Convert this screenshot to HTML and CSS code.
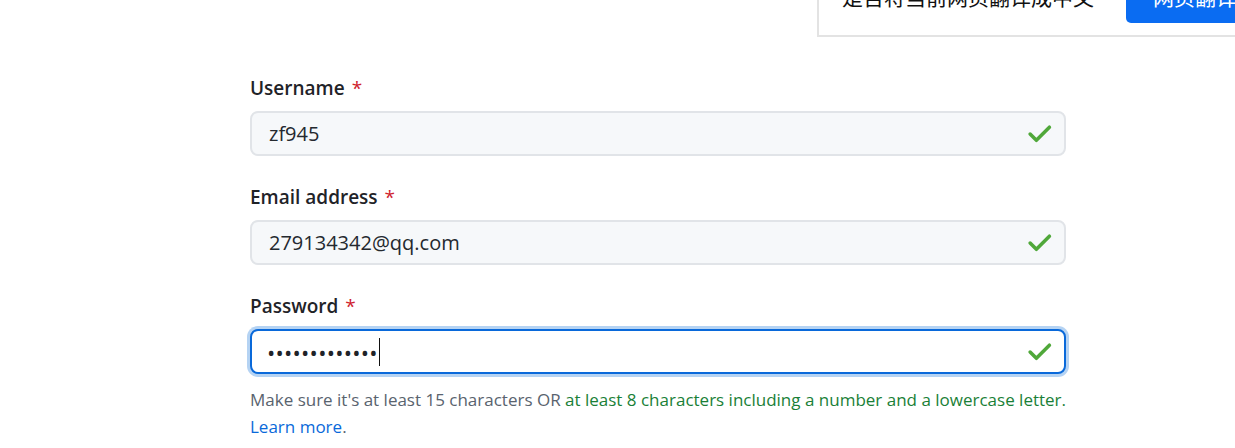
FILE: index.html
```html
<!DOCTYPE html>
<html lang="en">
<head>
<meta charset="utf-8">
<title>Sign up</title>
<link rel="stylesheet" href="styles.css">
</head>
<body>
<div class="translate-bar">
  <span class="translate-text">是否将当前网页翻译成中文</span>
  <div class="translate-btn">网页翻译</div>
</div>
<main class="form">
  <div class="field">
    <label class="label">Username <span class="req">*</span></label>
    <div class="input">
      <span class="value">zf945</span>
      <svg class="check" viewBox="0 0 24 18" width="25" height="19"><path d="M3 9.5l6 6L21.5 3" fill="none" stroke="#50a83a" stroke-width="3.4" stroke-linecap="round" stroke-linejoin="round"/></svg>
    </div>
  </div>
  <div class="field">
    <label class="label">Email address <span class="req">*</span></label>
    <div class="input">
      <span class="value">279134342@qq.com</span>
      <svg class="check" viewBox="0 0 24 18" width="25" height="19"><path d="M3 9.5l6 6L21.5 3" fill="none" stroke="#50a83a" stroke-width="3.4" stroke-linecap="round" stroke-linejoin="round"/></svg>
    </div>
  </div>
  <div class="field">
    <label class="label">Password <span class="req">*</span></label>
    <div class="input focused">
      <span class="value dots">•••••••••••••</span><span class="caret"></span>
      <svg class="check" viewBox="0 0 24 18" width="25" height="19"><path d="M3 9.5l6 6L21.5 3" fill="none" stroke="#50a83a" stroke-width="3.4" stroke-linecap="round" stroke-linejoin="round"/></svg>
    </div>
    <p class="help">Make sure it's at least 15 characters OR <span class="ok">at least 8 characters including a number and a lowercase letter.</span><br><a class="link" href="#">Learn more</a>.</p>
  </div>
</main>
</body>
</html>
```
FILE: styles.css
```css
html, body {
  margin: 0;
  padding: 0;
  background: #ffffff;
  overflow: hidden;
}
body {
  font-family: "Open Sans", "Noto Sans", "Noto Sans CJK SC", sans-serif;
  color: #24292f;
  width: 1235px;
  height: 448px;
  position: relative;
}
.translate-bar {
  position: absolute;
  left: 817px;
  top: -40px;
  width: 440px;
  height: 77px;
  border: 2px solid #e3e3e3;
  background: #fff;
  box-sizing: border-box;
}
.translate-text {
  position: absolute;
  left: 23px;
  top: 21px;
  font-family: "Noto Sans CJK SC", sans-serif;
  font-size: 21px;
  color: #111;
  line-height: 26px;
  white-space: nowrap;
}
.translate-btn {
  position: absolute;
  left: 307px;
  top: -2px;
  height: 63px;
  width: 140px;
  border-radius: 5px;
  background: #0a6cf2;
  color: #fff;
  font-family: "Noto Sans CJK SC", sans-serif;
  font-size: 21px;
  line-height: 26px;
  padding: 23px 0 0 27px;
  box-sizing: border-box;
  white-space: nowrap;
}
.form {
  margin-left: 250px;
  width: 816px;
  padding-top: 74px;
  display: flex;
  flex-direction: column;
  gap: 27px;
}
.field {
  display: flex;
  flex-direction: column;
}
.label {
  font-size: 19px;
  font-weight: 600;
  line-height: 28px;
  color: #1f2328;
  margin-bottom: 9px;
}
.req {
  color: #cf222e;
  font-weight: 400;
  margin-left: 2px;
}
.input {
  height: 45px;
  box-sizing: border-box;
  border: 2px solid #e1e4e8;
  border-radius: 8px;
  background: #f6f8fa;
  display: flex;
  align-items: center;
  padding: 0 12px 0 17px;
  position: relative;
}
.input.focused {
  border: 2px solid #0969da;
  background: #ffffff;
  box-shadow: 0 0 0 3px #b5d3f3;
}
.value {
  font-size: 20px;
  color: #24292f;
  flex: 0 0 auto;
}
.dots {
  font-size: 22px;
  letter-spacing: 0.25px;
  color: #1f2328;
  margin-left: -2px;
}
.caret {
  width: 1px;
  height: 28px;
  background: #111;
  margin-left: 1px;
}
.check {
  margin-left: auto;
}
.help {
  margin: 12px 0 0 0;
  font-size: 17px;
  line-height: 27px;
  color: #59636e;
  white-space: nowrap;
}
.ok {
  color: #1a7f37;
}
.link {
  color: #0969da;
  text-decoration: none;
}
```
